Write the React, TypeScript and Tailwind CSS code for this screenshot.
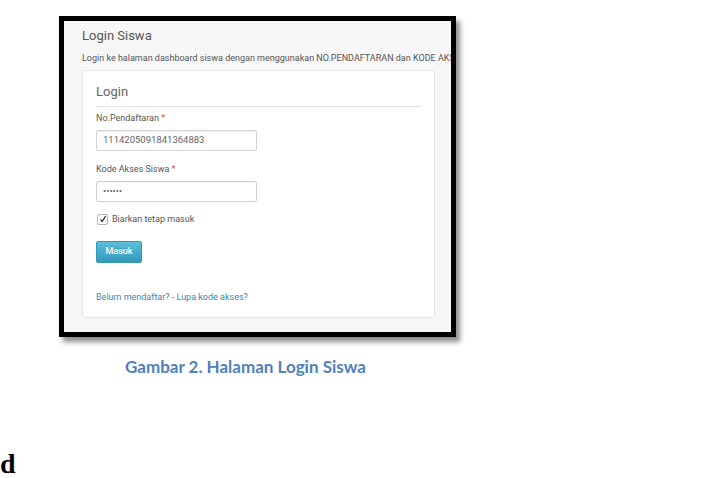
import React from 'react';

const ui = { fontFamily: 'Roboto, "Liberation Sans", sans-serif' };

const Field = ({ label, value, mt }: { label: string; value: string; mt: string }) => (
  <div className={`flex flex-col ${mt}`}>
    <label className="text-[9px] leading-[12px] text-[#555]">
      {label} <span className="text-[#d9534f]">*</span>
    </label>
    <div className="mt-[6px] flex h-[21px] w-[161px] items-center rounded-[2px] border border-[#d4d4d4] bg-white px-[6px] text-[9.5px] text-[#666] shadow-[inset_0_1px_1px_rgba(0,0,0,0.06)]">
      {value}
    </div>
  </div>
);

export default function App() {
  return (
    <div className="relative h-[478px] w-[714px] overflow-hidden bg-white">
      {/* screenshot frame */}
      <div className="ml-[59px] mt-[16px] h-[321px] w-[397px] border-[5px] border-black shadow-[4px_5px_5px_rgba(0,0,0,0.45)]">
        <div className="h-full overflow-hidden bg-[#f7f7f7] pl-[18px] pt-[5px]" style={ui}>
          <h1 className="text-[13px] leading-[20px] text-[#555]">Login Siswa</h1>
          <p className="mt-[6px] whitespace-nowrap text-[9px] leading-[12px] text-[#555]">
            Login ke halaman dashboard siswa dengan menggunakan NO.PENDAFTARAN dan KODE AKSES
          </p>

          <div className="mt-[6px] h-[248px] w-[353px] rounded-[3px] border border-[#e6e6e6] bg-white px-[13px] pt-[12px]">
            <h2 className="border-b border-[#e2e2e2] pb-[5px] text-[13px] leading-[18px] text-[#666]">Login</h2>

            <Field label="No.Pendaftaran" value="1114205091841364883" mt="mt-[5px]" />
            <Field label="Kode Akses Siswa" value="••••••" mt="mt-[12px]" />

            <div className="mt-[11px] flex items-center gap-[4px]">
              <span className="ml-[1px] flex h-[11px] w-[11px] items-center justify-center rounded-[2px] border border-[#b5b5b5] bg-white">
                <svg width="8" height="8" viewBox="0 0 8 8">
                  <path d="M1.5 4.5 L3.2 6.4 L6.6 1.2" fill="none" stroke="#333" strokeWidth="1.2" />
                </svg>
              </span>
              <span className="text-[9px] leading-[12px] text-[#555]">Biarkan tetap masuk</span>
            </div>

            <button className="mt-[16px] h-[22px] w-[46px] rounded-[2px] border border-[#3494b3] bg-gradient-to-b from-[#5bbfdc] to-[#3399b9] text-[9px] font-medium text-white [text-shadow:0_-1px_0_rgba(0,0,0,0.2)]">
              Masuk
            </button>

            <p className="mt-[28px] text-[9px] leading-[12px] text-[#3a87ad]">
              Belum mendaftar? - Lupa kode akses?
            </p>
          </div>
        </div>
      </div>

      <p
        className="ml-[125px] mt-[20px] text-[17px] font-bold leading-[20px] text-[#4f81bd]"
        style={{ fontFamily: 'Lato, "Liberation Sans", sans-serif' }}
      >
        Gambar 2. Halaman Login Siswa
      </p>

      <p
        className="absolute left-0 top-[449px] text-[28px] font-bold leading-[30px] text-black"
        style={{ fontFamily: '"Liberation Serif", serif' }}
      >
        d
      </p>
    </div>
  );
}
